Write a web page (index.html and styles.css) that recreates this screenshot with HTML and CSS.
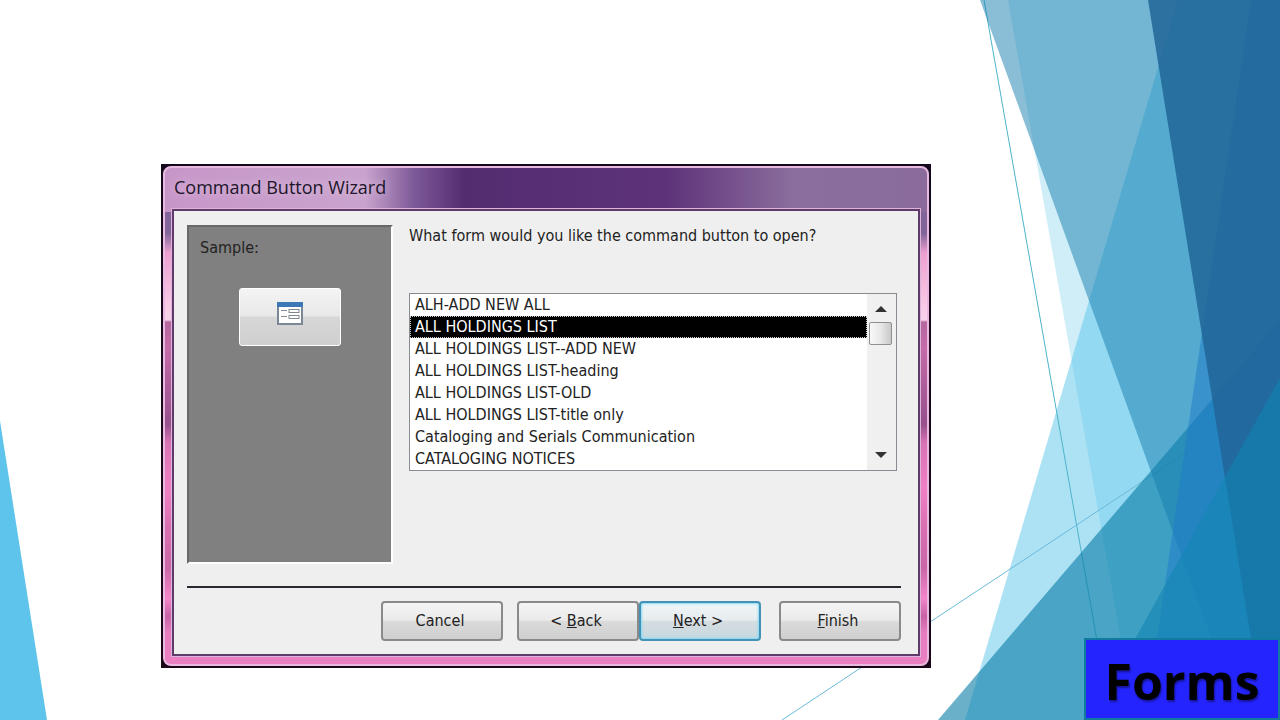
FILE: index.html
```html
<!DOCTYPE html>
<html lang="en">
<head>
    <meta charset="UTF-8">
    <meta name="viewport" content="width=device-width, initial-scale=1.0">
    <title>Forms</title>
    <link rel="stylesheet" href="styles.css">
</head>
<body>

    <!-- Slide background -->
    <svg class="backdrop" viewBox="0 0 1280 720" preserveAspectRatio="none" aria-hidden="true">
        <polygon points="0,421 47,720 0,720" fill="#5fc4ec"/>
        <polygon points="1178,0 1280,0 1280,720 965,720" fill="#5bc5eb" fill-opacity="0.5"/>
        <polygon points="1008,0 1280,0 1280,720 1135,720" fill="#4fc0e6" fill-opacity="0.27"/>
        <line x1="984" y1="0" x2="1111" y2="720" stroke="#4db3cc"/>
        <line x1="782" y1="720" x2="1187" y2="452" stroke="#6bbadb"/>
        <polygon points="938,720 1280,320 1280,720" fill="#067ba5" fill-opacity="0.6"/>
        <polygon points="980,0 1280,0 1280,720 1241,720" fill="#157dad" fill-opacity="0.5"/>
        <polygon points="1251,0 1280,0 1280,720 1145,720" fill="#2079ca" fill-opacity="0.5"/>
        <polygon points="1148,0 1280,0 1280,720 1264,720" fill="#216598" fill-opacity="0.85"/>
        <polygon points="1280,378 1280,720 1090,720" fill="#1286b2" fill-opacity="0.6"/>
    </svg>

    <main class="slide">
        <div class="window">
            <div class="frame">
                <h1 class="title">Command Button Wizard</h1>
                <form class="panel">
                    <div class="content">
                        <div class="sample">
                            <p id="sampleLabel">Sample:</p>
                            <button type="button" class="sample-btn" aria-labelledby="sampleLabel">
                                <svg width="26" height="23" viewBox="0 0 26 23">
                                    <rect x="1" y="1" width="24" height="21" fill="#fff" stroke="#7b8794" stroke-width="2"/>
                                    <rect width="26" height="5" fill="#3b78b5"/>
                                    <path d="M4 8.500h6M4 14.500h6" stroke="#8b8f94"/>
                                    <rect x="12" y="7.500" width="10" height="3" fill="#fff" stroke="#7f8790"/>
                                    <rect x="12" y="13.500" width="10" height="3" fill="#fff" stroke="#7f8790"/>
                                </svg>
                            </button>
                        </div>
                        <div class="choice">
                            <label for="formList">What form would you like the command button to open?</label>
                            <div class="listbox">
                                <select id="formList" size="8">
                                    <option>ALH-ADD NEW ALL</option>
                                    <option selected>ALL HOLDINGS LIST</option>
                                    <option>ALL HOLDINGS LIST--ADD NEW</option>
                                    <option>ALL HOLDINGS LIST-heading</option>
                                    <option>ALL HOLDINGS LIST-OLD</option>
                                    <option>ALL HOLDINGS LIST-title only</option>
                                    <option>Cataloging and Serials Communication</option>
                                    <option>CATALOGING NOTICES</option>
                                </select>
                                <div class="scrollbar" aria-hidden="true">
                                    <svg width="12" height="6" viewBox="0 0 12 6"><path d="M0 6L6 0L12 6Z" fill="#333"/></svg>
                                    <span class="thumb"></span>
                                    <svg class="down" width="12" height="6" viewBox="0 0 12 6"><path d="M0 0L6 6L12 0Z" fill="#333"/></svg>
                                </div>
                            </div>
                        </div>
                    </div>
                    <div class="actions">
                        <button type="button">Cancel</button>
                        <button type="button" class="back">&lt; <u>B</u>ack</button>
                        <button type="button" class="next"><u>N</u>ext &gt;</button>
                        <button type="button" class="finish"><u>F</u>inish</button>
                    </div>
                </form>
            </div>
        </div>
    </main>

    <a href="#" class="forms-link">Forms</a>

</body>
</html>
```
FILE: styles.css
```css
* {
    box-sizing: border-box;
}
body {
    margin: 0;
    background-color: #fff;
    color: #222;
    font-family: "DejaVu Sans Condensed", "DejaVu Sans", sans-serif;
    font-size: 16px;
    overflow: hidden;
}
.backdrop {
    position: fixed;
    top: 0;
    left: 0;
    width: 100%;
    height: 100%;
    z-index: -1;
}
.slide {
    padding: 164px 349px 52px 161px;
}
.window {
    padding: 2px;
    background: linear-gradient(#14081f, #1c0518);
}
.frame {
    padding: 0 7px 8px;
    border: 2px solid #e9b9df;
    border-radius: 8px;
    background:
        linear-gradient(90deg, #c796c8 0, #c9a3cd 200px, rgba(120, 80, 150, 0.6) 250px, #532c70 300px, #5d3279 500px, #8c6e9e 630px, #8a6b9b 100%) top / 100% 44px no-repeat,
        linear-gradient(#80649a 0, #80649a 65px, #eca0d0 85px, #f9cbe6 140px, #f5d3ea 152px, #b5679f 154px, #c46ba8 180px, #96508c 256px, #d873b4 275px, #ef80c4 320px, #d96fb0 360px, #c966a6 400px, #f486c9 430px, #c763a6 448px, #e77dbf 465px, #ea80c2 100%);
}
.title {
    margin: 0;
    padding: 7px 2px 0;
    height: 41px;
    font-family: "Open Sans", "Noto Sans", sans-serif;
    font-size: 18px;
    line-height: 24px;
    font-weight: normal;
    color: #20152a;
    text-shadow: 0 0 8px #e5c8e6;
}
.panel {
    padding: 14px 17px 13px 13px;
    background-color: #efefef;
    border: 2px solid #5f3a6b;
    outline: 1px solid #dcb3db;
}
.content {
    display: flex;
    gap: 16px;
    padding-bottom: 22px;
    border-bottom: 2px solid #282830;
}
.sample {
    display: flex;
    flex-direction: column;
    align-items: center;
    width: 206px;
    height: 339px;
    background-color: #808080;
    border: 2px solid #fff;
    border-top-color: #686868;
    border-left-color: #686868;
}
.sample p {
    align-self: flex-start;
    margin: 0;
    padding: 11px 11px 30px;
    line-height: 20px;
}
.sample-btn {
    width: 102px;
    height: 58px;
    padding: 0 0 4px;
    border: 1px solid #fff;
    border-radius: 3px;
    background: linear-gradient(#f4f4f4 0, #e8e8e8 48%, #d7d7d7 50%, #cfcfcf 100%);
}
.choice {
    flex: 1;
    display: flex;
    flex-direction: column;
    padding-right: 4px;
}
.choice label {
    height: 68px;
    line-height: 22px;
}
.listbox {
    display: flex;
    border: 1px solid #888c92;
    background-color: #fff;
}
.listbox select {
    flex: 1;
    height: 176px;
    padding: 0;
    border: 0;
    outline: 0;
    overflow: hidden;
    background-color: #fff;
    color: #222;
    font: inherit;
}
.listbox option {
    height: 22px;
    padding: 1px 5px 0;
    line-height: 21px;
}
.listbox option:checked {
    background: linear-gradient(#000, #000);
    color: #fff;
    outline: 1px dotted #ccc;
    outline-offset: -1px;
}
.scrollbar {
    display: flex;
    flex-direction: column;
    align-items: center;
    gap: 10px;
    width: 29px;
    padding: 12px 2px 12px 0;
    background-color: #f0f0f0;
}
.thumb {
    width: 23px;
    height: 23px;
    border: 1px solid #8f8f8f;
    border-radius: 2px;
    background: linear-gradient(90deg, #f8f8f8, #e8e8e8 50%, #c8c8cc);
}
.down {
    margin-top: auto;
}
.actions {
    display: flex;
    justify-content: flex-end;
    padding-top: 13px;
}
.actions button {
    width: 122px;
    height: 40px;
    padding: 0 4px 2px 0;
    border: 2px solid #8a8a8a;
    border-radius: 4px;
    background: linear-gradient(#f5f5f5 0, #eaeaea 48%, #dbdbdb 50%, #cfcfcf 100%);
    color: #222;
    font: inherit;
}
.actions .back {
    margin-left: 14px;
}
.actions .next {
    border-color: #4591b5;
    background: linear-gradient(#f0f5f7 0, #e6ebed 48%, #d5dde0 50%, #c7d8df 100%);
    box-shadow: inset 0 0 2px 1px #7fdcf7;
}
.actions .finish {
    margin-left: 18px;
}
.forms-link {
    position: fixed;
    right: 0;
    bottom: 0;
    width: 196px;
    height: 82px;
    border: 2px solid #127a9f;
    background-color: #2424ff;
    color: #000;
    font-family: "Open Sans", "Noto Sans", sans-serif;
    font-size: 50px;
    font-weight: bold;
    line-height: 82px;
    text-align: center;
    text-decoration: none;
    text-shadow: 1px 2px 2px rgba(0, 0, 0, 0.4);
}
```
